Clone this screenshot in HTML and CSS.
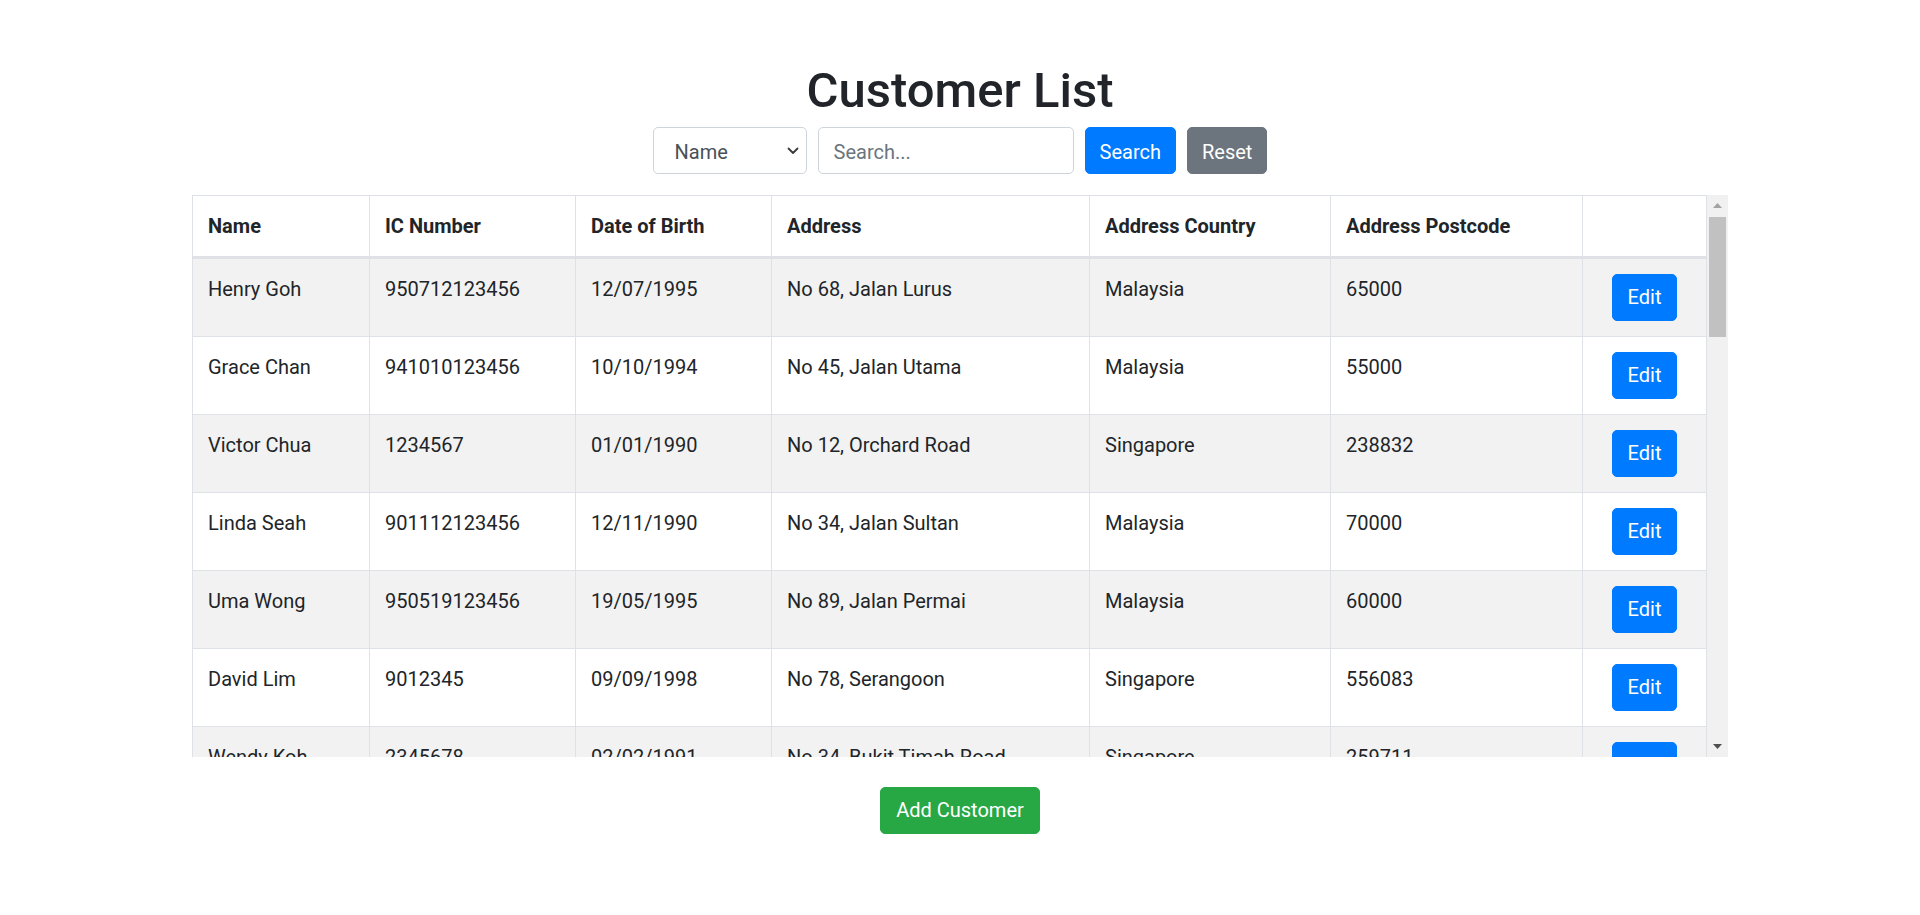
FILE: index.html
```html
<!DOCTYPE html>
<html lang="en">
<head>
<meta charset="utf-8">
<title>Customer List</title>
<link rel="stylesheet" href="styles.css">
</head>
<body>
<main class="page">
  <h1 class="title">Customer List</h1>
  <form class="search-bar">
    <div class="select-wrap">
      <select class="field select">
        <option>Name</option>
        <option>IC Number</option>
      </select>
      <svg class="chevron" width="12" height="8" viewBox="0 0 12 8"><path d="M1.5 1.5 L6 6 L10.5 1.5" fill="none" stroke="#3a3a3a" stroke-width="1.8" stroke-linecap="round" stroke-linejoin="round"/></svg>
    </div>
    <input class="field input" type="text" placeholder="Search...">
    <button type="button" class="btn btn-primary btn-bar">Search</button>
    <button type="button" class="btn btn-secondary btn-bar">Reset</button>
  </form>

  <div class="table-frame">
    <div class="table-viewport">
      <table class="table">
        <colgroup>
          <col class="c-name"><col class="c-ic"><col class="c-dob"><col class="c-addr"><col class="c-country"><col class="c-post"><col class="c-act">
        </colgroup>
        <thead>
          <tr><th>Name</th><th>IC Number</th><th>Date of Birth</th><th>Address</th><th>Address Country</th><th>Address Postcode</th><th></th></tr>
        </thead>
        <tbody>
          <tr><td>Henry Goh</td><td>950712123456</td><td>12/07/1995</td><td>No 68, Jalan Lurus</td><td>Malaysia</td><td>65000</td><td class="act"><button type="button" class="btn btn-primary">Edit</button></td></tr>
          <tr><td>Grace Chan</td><td>941010123456</td><td>10/10/1994</td><td>No 45, Jalan Utama</td><td>Malaysia</td><td>55000</td><td class="act"><button type="button" class="btn btn-primary">Edit</button></td></tr>
          <tr><td>Victor Chua</td><td>1234567</td><td>01/01/1990</td><td>No 12, Orchard Road</td><td>Singapore</td><td>238832</td><td class="act"><button type="button" class="btn btn-primary">Edit</button></td></tr>
          <tr><td>Linda Seah</td><td>901112123456</td><td>12/11/1990</td><td>No 34, Jalan Sultan</td><td>Malaysia</td><td>70000</td><td class="act"><button type="button" class="btn btn-primary">Edit</button></td></tr>
          <tr><td>Uma Wong</td><td>950519123456</td><td>19/05/1995</td><td>No 89, Jalan Permai</td><td>Malaysia</td><td>60000</td><td class="act"><button type="button" class="btn btn-primary">Edit</button></td></tr>
          <tr><td>David Lim</td><td>9012345</td><td>09/09/1998</td><td>No 78, Serangoon</td><td>Singapore</td><td>556083</td><td class="act"><button type="button" class="btn btn-primary">Edit</button></td></tr>
          <tr><td>Wendy Koh</td><td>2345678</td><td>02/02/1991</td><td>No 34, Bukit Timah Road</td><td>Singapore</td><td>259711</td><td class="act"><button type="button" class="btn btn-primary">Edit</button></td></tr>
        </tbody>
      </table>
    </div>
    <div class="scrollbar" aria-hidden="true">
      <div class="sb-btn"><svg width="9" height="5" viewBox="0 0 9 5"><polygon points="0,5 4.5,0 9,5" fill="#a3a3a3"/></svg></div>
      <div class="sb-track"><div class="sb-thumb"></div></div>
      <div class="sb-btn"><svg width="9" height="5" viewBox="0 0 9 5"><polygon points="0,0 9,0 4.5,5" fill="#505050"/></svg></div>
    </div>
  </div>

  <div class="footer-actions">
    <button type="button" class="btn btn-success">Add Customer</button>
  </div>
</main>
</body>
</html>
```
FILE: styles.css
```css
* { box-sizing: border-box; }

html, body {
  margin: 0;
  padding: 0;
  background: #fff;
}

body {
  font-family: Roboto, "Liberation Sans", Arial, sans-serif;
  font-size: 20px;
  line-height: 30px;
  color: #212529;
}

.page {
  padding-top: 61px;
}

.title {
  margin: 0 0 6px;
  font-size: 49px;
  line-height: 60px;
  font-weight: 500;
  text-align: center;
  color: #212529;
}

.search-bar {
  display: flex;
  justify-content: center;
  align-items: center;
  gap: 11px;
  margin: 0 0 21px;
}

.select-wrap {
  position: relative;
  display: flex;
}

.field {
  height: 47px;
  border: 1px solid #ced4da;
  border-radius: 5px;
  background: #fff;
  font-family: inherit;
  font-size: 20px;
  color: #495057;
  outline: none;
}

.select {
  width: 154px;
  padding: 2px 30px 0 21px;
  appearance: none;
  -webkit-appearance: none;
}

.chevron {
  position: absolute;
  right: 8px;
  top: 20px;
  pointer-events: none;
}

.input {
  width: 256px;
  padding: 2px 15px 0;
}

.input::placeholder {
  color: #6c757d;
}

.btn {
  display: inline-block;
  padding: 7px 15px;
  border: 1px solid transparent;
  border-radius: 5px;
  font-family: inherit;
  font-size: 20px;
  line-height: 31px;
  font-weight: 400;
  color: #fff;
  cursor: pointer;
}

.btn-bar {
  padding: 9px 14px 5px;
}

.btn-primary { background: #007bff; border-color: #007bff; }
.btn-secondary { background: #6c757d; border-color: #6c757d; }
.btn-success { background: #28a745; border-color: #28a745; }

.table-frame {
  display: flex;
  width: 80%;
  height: 562px;
  margin: 0 auto;
}

.table-viewport {
  flex: 1;
  min-width: 0;
  overflow: hidden;
}

.table {
  width: 100%;
  border-collapse: collapse;
  table-layout: fixed;
  border: 1px solid #dee2e6;
}

.c-name { width: 177px; }
.c-ic { width: 206px; }
.c-dob { width: 196px; }
.c-addr { width: 318px; }
.c-country { width: 241px; }
.c-post { width: 252px; }

.table th,
.table td {
  padding: 15px;
  border: 1px solid #dee2e6;
  text-align: left;
  vertical-align: top;
  white-space: nowrap;
  overflow: hidden;
}

.table th {
  font-weight: 700;
  border-bottom: 3px solid #dee2e6;
}

.table td {
  font-weight: 400;
}

.table tbody tr:nth-child(odd) {
  background: #f2f2f2;
}

.table td.act {
  text-align: center;
}

.scrollbar {
  width: 21px;
  display: flex;
  flex-direction: column;
  background: #f1f1f1;
}

.sb-btn {
  height: 21px;
  display: flex;
  align-items: center;
  justify-content: center;
}

.sb-track {
  flex: 1;
  padding: 1px 2px 0;
}

.sb-thumb {
  height: 120px;
  background: #c1c1c1;
}

.footer-actions {
  display: flex;
  justify-content: center;
  margin-top: 30px;
}
```
